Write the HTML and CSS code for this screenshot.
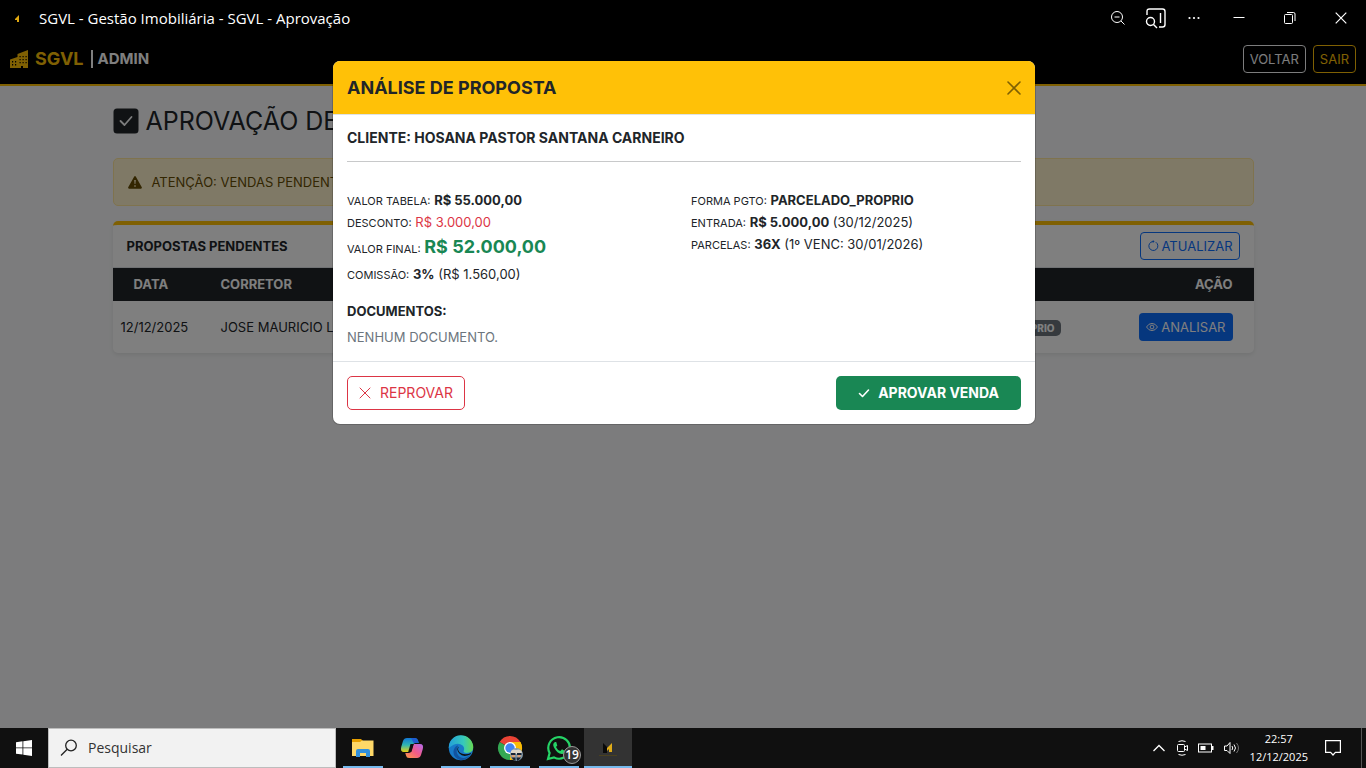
FILE: index.html
```html
<!DOCTYPE html>
<html lang="pt-BR">
<head>
<meta charset="utf-8">
<meta name="viewport" content="width=device-width, initial-scale=1">
<title>SGVL - Aprovação</title>
<link rel="stylesheet" href="styles.css">
</head>
<body>
<div class="titlebar">
  <svg class="app-icon" viewBox="0 0 16 16"><path d="M10 5v7H8v-2H6V9z" fill="#e0a810"/></svg>
  <span class="window-title">SGVL - Gestão Imobiliária - SGVL - Aprovação</span>
  <div class="window-tools">
    <button class="tool" aria-label="Zoom"><svg width="16" height="16" viewBox="0 0 16 16" fill="none" stroke="#fff"><circle cx="7" cy="7" r="5.500"/><path d="M4.500 7h5M11 11l3.500 3.500"/></svg></button>
    <button class="tool" aria-label="Pesquisar na página"><svg width="22" height="22" viewBox="0 0 22 22" fill="none" stroke="#fff" stroke-width="1.400"><path d="M2 8V4.500Q2 2 4.500 2h13Q20 2 20 4.500v13Q20 20 17.500 20H14M15.500 6v10"/><circle cx="5.500" cy="14.500" r="4"/><path d="M8.500 17.500l3.500 3.500"/></svg></button>
    <button class="tool" aria-label="Mais"><svg width="12" height="4" viewBox="0 0 12 4" fill="#fff"><circle cx="1.500" cy="2" r="1.100"/><circle cx="6" cy="2" r="1.100"/><circle cx="10.500" cy="2" r="1.100"/></svg></button>
  </div>
  <div class="window-controls">
    <button class="control" aria-label="Minimizar"><svg width="12" height="12" viewBox="0 0 12 12" stroke="#fff"><path d="M.5 5.500h11"/></svg></button>
    <button class="control" aria-label="Restaurar"><svg width="12" height="12" viewBox="0 0 12 12" fill="none" stroke="#fff"><rect x=".5" y="2.500" width="8" height="9" rx="1"/><path d="M3 .5h6.500q1.500 0 1.500 1.500v7"/></svg></button>
    <button class="control" aria-label="Fechar"><svg width="12" height="12" viewBox="0 0 12 12" stroke="#fff" stroke-width="1.200"><path d="M.7.700l10.600 10.600M11.300.700L.7 11.300"/></svg></button>
  </div>
</div>

<div class="app">
  <nav class="navbar">
    <a class="brand" href="#"><svg width="18" height="18" viewBox="0 0 18 18"><path fill="#ffc107" fill-rule="evenodd" d="M0 9.500L7.500 7V4L18 0v18h-5v-2h-2v2H0zM2 11v1.500h1.200V11zm3 0v1.500h1.200V11zM2 14v1.500h1.200V14zm3 0v1.500h1.200V14zM9.500 6v1.300h1.200V6zm3 0v1.300h1.200V6zm3 0v1.300h1.200V6zm-6 3v1.300h1.200V9zm3 0v1.300h1.200V9zm3 0v1.300h1.200V9zm-6 3v1.300h1.200V12zm3 0v1.300h1.200V12zm3 0v1.300h1.200V12z"/></svg>
      <span class="brand-name">SGVL</span><span class="bar"></span><span class="brand-area">ADMIN</span></a>
    <div class="nav-actions">
      <button class="btn btn-small btn-outline-light">VOLTAR</button>
      <button class="btn btn-small btn-outline-warning">SAIR</button>
    </div>
  </nav>

  <main class="container">
    <h1 class="page-title"><svg width="26" height="26" viewBox="0 0 26 26"><rect width="25" height="25" x=".5" y=".5" rx="3.500" fill="#212529"/><path d="M7.500 13l4 4 7-8" fill="none" stroke="#f8f9fa" stroke-width="1.800" stroke-linecap="round" stroke-linejoin="round"/></svg>APROVAÇÃO DE VENDAS</h1>

    <div class="alert"><svg width="14" height="13" viewBox="0 0 14 13"><path fill="#664d03" fill-rule="evenodd" d="M6.100.700Q7-.5 7.900.700l5.900 10.500Q14.200 12.500 13 12.700H1Q-.2 12.500.2 11.200zM6.200 4l.4 4h.8l.4-4zM6.300 9.300v1.500h1.400V9.300z"/></svg>ATENÇÃO: VENDAS PENDENTES</div>

    <section class="card">
      <header class="card-header">
        <h2 class="card-title">PROPOSTAS PENDENTES</h2>
        <button class="btn btn-small btn-outline-primary"><svg width="12" height="12" viewBox="0 0 12 12" fill="none" stroke="#0d6efd"><path d="M8.800 2.200A4.500 4.500 0 1 1 6 1.500"/><path d="M5.800 0L7.600 1.500 5.800 3z" fill="#0d6efd" stroke="none"/></svg>ATUALIZAR</button>
      </header>
      <table class="table">
        <thead><tr><th class="col-date">DATA</th><th>CORRETOR</th><th class="col-payment"></th><th class="col-action">AÇÃO</th></tr></thead>
        <tbody><tr><td class="col-date">12/12/2025</td><td>JOSE MAURICIO LIMA</td><td class="col-payment"><span class="badge">PARCELADO_PROPRIO</span></td>
        <td class="col-action"><button class="btn btn-small btn-primary"><svg width="12" height="12" viewBox="0 0 16 16" fill="none" stroke="#fff" stroke-width="1.300"><path d="M.7 8Q3.500 3.200 8 3.200T15.300 8Q12.500 12.800 8 12.800T.7 8z"/><circle cx="8" cy="8" r="2.500"/></svg>ANALISAR</button></td></tr></tbody>
      </table>
    </section>
  </main>

  <div class="backdrop">
    <div class="modal" role="dialog" aria-labelledby="modal-title">
      <header class="modal-header">
        <h2 class="modal-title" id="modal-title">ANÁLISE DE PROPOSTA</h2>
        <button class="close" aria-label="Fechar"><svg width="14" height="14" viewBox="0 0 14 14" stroke="#000" stroke-width="1.600" stroke-linecap="round"><path d="M1 1l12 12M13 1L1 13"/></svg></button>
      </header>
      <div class="modal-body">
        <h3 class="client">CLIENTE: HOSANA PASTOR SANTANA CARNEIRO</h3>
        <hr class="divider">
        <div class="details">
          <div>
            <p class="line"><small>VALOR TABELA:</small> <b>R$ 55.000,00</b></p>
            <p class="line"><small>DESCONTO:</small> <span class="discount">R$ 3.000,00</span></p>
            <p class="line line-total"><small>VALOR FINAL:</small> <b class="total">R$ 52.000,00</b></p>
            <p class="line"><small>COMISSÃO:</small> <b>3%</b> (R$ 1.560,00)</p>
          </div>
          <div>
            <p class="line"><small>FORMA PGTO:</small> <b>PARCELADO_PROPRIO</b></p>
            <p class="line"><small>ENTRADA:</small> <b>R$ 5.000,00</b> (30/12/2025)</p>
            <p class="line"><small>PARCELAS:</small> <b>36X</b> (1º VENC: 30/01/2026)</p>
          </div>
        </div>
        <h4 class="docs-title">DOCUMENTOS:</h4>
        <p class="docs-empty">NENHUM DOCUMENTO.</p>
      </div>
      <footer class="modal-footer">
        <button class="btn btn-outline-danger"><svg width="12" height="12" viewBox="0 0 12 12" stroke="#dc3545" stroke-linecap="round"><path d="M1 1l10 10M11 1L1 11"/></svg>REPROVAR</button>
        <button class="btn btn-success"><svg width="12" height="12" viewBox="0 0 12 12" fill="none" stroke="#fff" stroke-width="1.600" stroke-linecap="round" stroke-linejoin="round"><path d="M1.500 6.500l3 3L10.500 3"/></svg>APROVAR VENDA</button>
      </footer>
    </div>
  </div>
</div>

<div class="taskbar">
  <button class="start" aria-label="Iniciar"><svg width="16" height="16" viewBox="0 0 16 16" fill="#fff"><path d="M0 2.200L6.500 1.300V7.500H0zM7.300 1.200L16 0v7.500H7.300zM0 8.300h6.500v6.300L0 13.800zM7.300 8.300H16V16l-8.700-1.200z"/></svg></button>
  <label class="search"><svg width="18" height="18" viewBox="0 0 18 18" fill="none" stroke="#222" stroke-width="1.300"><circle cx="11" cy="6.500" r="5.300"/><path d="M7.200 10.300L1 16.500"/></svg><input type="text" placeholder="Pesquisar" aria-label="Pesquisar"></label>
  <div class="tasks">
    <button class="task open" aria-label="Explorador de Arquivos"><svg width="24" height="24" viewBox="0 0 24 24"><path d="M1 3h9l2 2h10v5H1z" fill="#e8a000"/><path d="M1 6h8l2-1.500h11.500V20H1z" fill="#ffd868"/><path d="M5 21v-6q0-2 2-2h10q2 0 2 2v6h-4v-4H9v4z" fill="#3290dc"/></svg></button>
    <button class="task" aria-label="Copilot"><svg width="24" height="24" viewBox="0 0 24 24"><defs><linearGradient id="cpa" x2="0" y2="1"><stop stop-color="#1377d5"/><stop offset=".5" stop-color="#2fb5b2"/><stop offset="1" stop-color="#e8d313"/></linearGradient><linearGradient id="cpb" x1="1" x2="0" y2="1"><stop stop-color="#b36bf0"/><stop offset=".5" stop-color="#f25a88"/><stop offset="1" stop-color="#ff9a45"/></linearGradient></defs><path d="M7 2h8q2.500 0 3 2.500l.7 2.500h-3.500q-2 0-2.700 2.500L10.500 16H4Q0 16 1.200 11L3 5Q4 2 7 2z" fill="url(#cpa)"/><path d="M11 2h4q2.500 0 3 2.500l.7 2.500h-4.500q-1.500-.5-1.700-2.500z" fill="#1e5bd0"/><path d="M17 22H9q-2.500 0-3-2.500L5.300 17h3.500q2 0 2.700-2.500L13.500 8H20q4 0 2.800 5L21 19q-1 3-4 3z" fill="url(#cpb)"/><path d="M10.500 8h3.300l-2.400 8H8.200z" fill="#101010"/></svg></button>
    <button class="task open" aria-label="Edge"><svg width="26" height="26" viewBox="0 0 24 24"><defs><linearGradient id="ea"><stop stop-color="#249fd8"/><stop offset=".6" stop-color="#36c9bb"/><stop offset="1" stop-color="#68d950"/></linearGradient></defs><circle cx="12" cy="12" r="11.300" fill="#187ac8"/><path d="M.7 12A11.300 11.300 0 0 1 23.300 11q0 5.500-6.300 5.500-3.300 0-2.500-2 1.200-2.500-1-4.700Q8.500 5.500.7 12z" fill="url(#ea)"/><path d="M9 11q-2.500 4.500 1 8.500 4.500 4 11-1.500-4 5.300-9.500 5.300Q5 21 5 15.500 5.500 11 9 9.500z" fill="#1254a0"/><path d="M10 10.500q-2 4 2 6.300 4.500 2 9.500-.5l-1 1.700Q14 21 10.500 17T10 10.500z" fill="#111"/></svg></button>
    <button class="task open" aria-label="Chrome"><svg width="26" height="26" viewBox="0 0 26 26"><path d="M13 13L2.600 7A12 12 0 0 1 23.400 7z" fill="#ea4335"/><path d="M13 13l10.400-6A12 12 0 0 1 13 25z" fill="#fbbc05"/><path d="M13 13v12A12 12 0 0 1 2.600 7z" fill="#34a853"/><path d="M13 7h10.400a12 12 0 0 1 1 9z" fill="#fbbc05"/><circle cx="13" cy="13" r="6" fill="#fff"/><circle cx="13" cy="13" r="4.700" fill="#4285f4"/><circle cx="19.500" cy="19.500" r="6.500" fill="#849aa8"/><path d="M14 16q2-2.500 5-1 4-1.500 6 2l-1 2H14z" fill="#ddd6c8"/><path d="M14 18h4.500v2H14zM20 18h4.500v2H20z" fill="#192536"/><path d="M14.500 20h3.500v2.500h-3zM20.500 20h3.500l-1 2.500h-2.500z" fill="#d6a07c"/><path d="M14.500 22.500h4V26q-2.500-1-4-3.500zM19.500 22.500h4.500q-1.500 2.500-4 3.500z" fill="#192536"/></svg></button>
    <button class="task open" aria-label="WhatsApp"><svg width="26" height="26" viewBox="0 0 26 26"><path d="M2 24l1.600-6A10.800 10.800 0 1 1 8 22.400z" fill="#111" stroke="#25d366" stroke-width="2.200"/><path d="M9 7q-3 1.500-1 5.500 3 6 8 6.500 3.500-.5 3-3l-3-1.700-1.700 1.700q-3-1-4.300-4l1.300-1.500L10.200 7z" fill="#25d366"/></svg><span class="count">19</span></button>
    <button class="task open active" aria-label="SGVL"><svg width="24" height="24" viewBox="0 0 24 24"><path d="M7 7l4 4v6H7z" fill="#090909"/><path d="M16 7v9h-3v-3l-2 2v-3z" fill="#e0ac18"/><path d="M3 19.500h18" stroke="#554818" stroke-width=".7"/></svg></button>
  </div>
  <div class="tray">
    <svg width="14" height="14" viewBox="0 0 14 14" fill="none" stroke="#fff" stroke-width="1.300"><path d="M1.500 10L7 4.500l5.500 5.500"/></svg>
    <svg width="14" height="16" viewBox="0 0 14 16" fill="none" stroke="#fff"><rect x="2.500" y="4.500" width="7" height="7" rx="1"/><path d="M9.500 7l3-1.500v5l-3-1.500M3.500 1.500q3.500-1.500 7 0M3.500 14.500q3.500 1.500 7 0"/></svg>
    <svg width="16" height="12" viewBox="0 0 16 12"><rect x=".5" y="2" width="13" height="8" fill="none" stroke="#fff"/><path d="M2.500 4h5v4h-5zM14 4h1.500v4H14z" fill="#fff"/></svg>
    <svg width="18" height="14" viewBox="0 0 18 14" fill="none" stroke="#fff"><path d="M1.500 5v4.500H4l3 3v-11L4 5zM9 5q1.500 2 0 4M11 3.500q3 3.500 0 7"/><path d="M13.500 2q4 5 0 10" stroke="#777"/></svg>
    <div class="clock"><span>22:57</span><span>12/12/2025</span></div>
    <svg width="16" height="16" viewBox="0 0 16 16" fill="none" stroke="#fff" stroke-width="1.200"><path d="M.6.600h14.800v11.800h-5L8 15l-2.400-2.600h-5z"/></svg>
  </div>
</div>
</body>
</html>
```

FILE: styles.css
```css
* { box-sizing: border-box; }

body {
  margin: 0;
  min-height: 100vh;
  display: flex;
  flex-direction: column;
  font-family: Inter, "Liberation Sans", sans-serif;
  font-size: 13px;
  line-height: 20px;
  color: #212529;
}

button, input { font: inherit; color: inherit; }
button { cursor: pointer; }
svg { display: block; flex: none; }
h1, h2, h3, h4, p { margin: 0; }

/* Window title bar */
.titlebar {
  display: flex;
  align-items: center;
  height: 35px;
  padding-left: 9px;
  background: #000;
  color: #fff;
  font-family: "Open Sans", "Noto Sans", sans-serif;
  font-size: 15px;
}
.app-icon { width: 16px; height: 16px; }
.window-title { margin-left: 14px; flex: 1; }
.window-tools, .window-controls { display: flex; }
.tool, .control {
  display: grid;
  place-items: center;
  height: 35px;
  padding: 0;
  border: 0;
  background: none;
}
.tool { width: 38px; }
.control { width: 51px; }

/* Application */
.app {
  position: relative;
  flex: 1;
  background: #f8f9fa;
}
.navbar {
  display: flex;
  align-items: center;
  justify-content: space-between;
  padding: 10px 10px 11px;
  background: #000;
  border-bottom: 2px solid #ffc107;
}
.brand {
  display: flex;
  align-items: center;
  gap: 7px;
  color: #ffc107;
  font-size: 18px;
  font-weight: 700;
  text-decoration: none;
}
.brand-area { color: #fff; font-size: 15px; margin-left: -2px; }
.bar { width: 2px; height: 18px; background: #fff; }
.nav-actions { display: flex; gap: 7px; }

.btn {
  display: inline-flex;
  align-items: center;
  border: 1px solid transparent;
  border-radius: 5px;
  background: none;
  font-size: 14px;
  line-height: 20px;
  padding: 6px 11px;
}
.btn-small { font-size: 13px; padding: 3px 6px; gap: 3px; border-radius: 4px; }
.btn-outline-light { color: #f8f9fa; border-color: #f8f9fa; }
.btn-outline-warning { color: #ffc107; border-color: #ffc107; }
.btn-outline-primary { color: #0d6efd; border-color: #0d6efd; }
.btn-primary { color: #fff; background: #0d6efd; }
.btn-outline-danger { color: #dc3545; border-color: #dc3545; gap: 9px; }
.btn-success { color: #fff; background: #198754; font-weight: 700; gap: 8px; padding: 6px 21px; }

.container {
  max-width: 1165px;
  margin: 0 auto;
  padding: 20px 12px;
}
.page-title {
  display: flex;
  align-items: center;
  gap: 7px;
  margin-bottom: 22px;
  font-size: 25px;
  line-height: 30px;
  font-weight: 400;
}
.alert {
  display: flex;
  align-items: center;
  gap: 10px;
  margin-bottom: 15px;
  padding: 13px 14px;
  border: 1px solid #ffe69c;
  border-radius: 5px;
  background: #fff3cd;
  color: #664d03;
}
.card {
  border-top: 4px solid #ffc107;
  border-radius: 5px;
  background: #fff;
  box-shadow: 0 2px 4px rgba(0, 0, 0, .08);
}
.card-header {
  display: flex;
  align-items: center;
  justify-content: space-between;
  padding: 7px 14px;
  border-bottom: 1px solid #dee2e6;
}
.card-title { font-size: 13px; font-weight: 700; }
.table { width: 100%; border-collapse: collapse; }
.table th {
  padding: 6px 8px 7px;
  background: #212529;
  color: #fff;
  font-weight: 700;
  text-align: left;
}
.table td { padding: 12px 8px; }
.table .col-date { width: 100px; }
.table th.col-date { padding-left: 21px; }
.table .col-payment { width: 400px; text-align: right; }
.table .col-action { width: 185px; padding-right: 21px; text-align: right; }
.table .btn { vertical-align: middle; }
.badge {
  display: inline-block;
  padding: 0 6px;
  border-radius: 5px;
  background: #6c757d;
  color: #fff;
  font-size: 10px;
  line-height: 16px;
  font-weight: 800;
}

/* Proposal dialog */
.backdrop {
  position: absolute;
  inset: 0;
  padding: 26px 14px 26px 16px;
  background: rgba(0, 0, 0, .5);
}
.modal {
  max-width: 702px;
  margin: 0 auto;
  overflow: hidden;
  border-radius: 7px;
  background: #fff;
  box-shadow: 0 0 0 1px rgba(0, 0, 0, .18);
}
.modal-header {
  display: flex;
  align-items: center;
  justify-content: space-between;
  padding: 14px;
  background: #ffc107;
  border-bottom: 1px solid #dee2e6;
}
.modal-title { font-size: 18px; line-height: 25px; font-weight: 700; }
.close { padding: 0; border: 0; background: none; opacity: .5; }
.modal-body { padding: 14px; }
.client { font-size: 14px; line-height: 18px; font-weight: 700; }
.divider { height: 1px; margin: 14px 0 27px; border: 0; background: #c8c9ca; }
.details { display: grid; grid-template-columns: 1fr 1fr; gap: 14px; }
.line { line-height: 22px; }
.line small { font-size: 11px; line-height: 1; }
.line-total { line-height: 30px; }
.discount { color: #dc3545; }
.total { color: #198754; font-size: 18px; line-height: 1; }
.docs-title { margin-top: 16px; font-size: 13px; font-weight: 700; }
.docs-empty { margin-top: 6px; color: #6c757d; }
.modal-footer {
  display: flex;
  justify-content: space-between;
  padding: 14px;
  border-top: 1px solid #dee2e6;
}

/* Desktop taskbar */
.taskbar {
  display: flex;
  height: 40px;
  background: #101010;
  color: #fff;
  font-family: "Open Sans", "Noto Sans", sans-serif;
}
.start { display: grid; place-items: center; width: 48px; padding: 0; border: 0; background: none; }
.search {
  display: flex;
  align-items: center;
  gap: 10px;
  width: 288px;
  padding: 0 11px;
  border: 1px solid #bdbdbd;
  background: #f2f2f2;
}
.search input { flex: 1; min-width: 0; padding: 0; border: 0; outline: 0; background: none; font-size: 14px; }
.search input::placeholder { color: #333; opacity: 1; }
.tasks { display: flex; gap: 1px; margin-left: 3px; flex: 1; }
.task {
  position: relative;
  display: grid;
  place-items: center;
  width: 48px;
  padding: 0;
  border: 0;
  background: none;
}
.open::after {
  content: "";
  position: absolute;
  inset: auto 4px 0;
  height: 2px;
  background: #76b9ed;
}
.active { background: #333; }
.active::after { inset: auto 0 0; }
.count {
  position: absolute;
  right: 2px;
  bottom: 4px;
  width: 18px;
  height: 18px;
  border: 1px solid #999;
  border-radius: 50%;
  background: #333;
  font-size: 12px;
  line-height: 16px;
  font-weight: 600;
}
.tray {
  display: flex;
  align-items: center;
  gap: 9px;
  margin-right: 4px;
  padding-right: 20px;
  border-right: 1px solid #555;
}
.clock {
  display: flex;
  flex-direction: column;
  align-items: center;
  margin-right: 8px;
  font-size: 11px;
  line-height: 18px;
}
```
